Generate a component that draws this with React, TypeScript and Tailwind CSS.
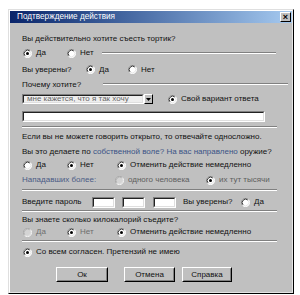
import React from 'react';

type RadioProps = { checked?: boolean; disabled?: boolean };

function Radio({ checked = false, disabled = false }: RadioProps) {
  // classic 3D sunken radio button
  return (
    <svg width="9" height="9" viewBox="0 0 12 12" className="shrink-0">
      <circle cx="6" cy="6" r="5.5" fill={disabled ? '#d4d4d4' : '#ffffff'} />
      <path d="M2.11 9.89 A5.5 5.5 0 0 1 9.89 2.11" fill="none" stroke={disabled ? '#a0a0a0' : '#808080'} strokeWidth="1" />
      <path d="M2.82 9.18 A4.5 4.5 0 0 1 9.18 2.82" fill="none" stroke={disabled ? '#b0b0b0' : '#000000'} strokeWidth="1" />
      <path d="M9.89 2.11 A5.5 5.5 0 0 1 2.11 9.89" fill="none" stroke="#ffffff" strokeWidth="1" />
      <path d="M9.18 2.82 A4.5 4.5 0 0 1 2.82 9.18" fill="none" stroke="#dfdfdf" strokeWidth="1" />
      {checked && <circle cx="6" cy="6" r="2" fill={disabled ? '#808080' : '#000000'} />}
    </svg>
  );
}

function Option({
  label,
  checked,
  disabled,
  className = '',
  textClass = 'text-[#111]',
}: {
  label: string;
  checked?: boolean;
  disabled?: boolean;
  className?: string;
  textClass?: string;
}) {
  return (
    <div className={`flex items-center gap-[4px] ${className}`}>
      <Radio checked={checked} disabled={disabled} />
      <span className={`whitespace-nowrap ${textClass}`}>{label}</span>
    </div>
  );
}

function Etched({ className = '' }: { className?: string }) {
  return <div className={`h-[2px] border-t border-t-[#808080] border-b border-b-white ${className}`} />;
}

function Sunken({ className = '', children }: { className?: string; children?: React.ReactNode }) {
  return (
    <div className={`border border-t-[#808080] border-l-[#808080] border-r-white border-b-white ${className}`}>
      <div className="h-full w-full border border-t-[#222] border-l-[#222] border-r-[#dfdfdf] border-b-[#dfdfdf]">
        {children}
      </div>
    </div>
  );
}

function Button({ label, className = '' }: { label: string; className?: string }) {
  return (
    <div className={`h-[15px] border border-t-white border-l-white border-r-black border-b-black ${className}`}>
      <div className="flex h-full w-full items-center justify-center border border-transparent border-r-[#808080] border-b-[#808080] text-[#111]">
        {label}
      </div>
    </div>
  );
}

export default function App() {
  return (
    <div
      className="h-[295px] w-[300px] overflow-hidden bg-white pl-[8px] pt-[9px] text-[8px] leading-none"
      style={{ fontFamily: '"Liberation Sans", Arial, sans-serif' }}
    >
      <div className="h-[285px] w-[286px] border border-t-[#dfdfdf] border-l-[#dfdfdf] border-r-black border-b-black bg-[#c0c0c0]">
        <div className="flex h-full flex-col border border-t-white border-l-white border-r-[#e4e4e4] border-b-[#e4e4e4]">
          {/* Title bar */}
          <div className="flex h-[12px] shrink-0 items-center justify-between bg-gradient-to-r from-[#0a246a] to-[#a6caf0] pl-[7px] pr-[1px]">
            <span className="text-[8.2px] text-white">Подтверждение действия</span>
            <div className="flex h-[10px] w-[11px] items-center justify-center border border-t-white border-l-white border-r-black border-b-black bg-[#c0c0c0] text-[9px] font-bold text-black">
              ×
            </div>
          </div>

          {/* Body */}
          <div className="flex flex-col pl-[12px] pt-[9px]">
            <div className="flex h-[14px] items-center text-[#111]">Вы действительно хотите съесть тортик?</div>

            <div className="flex h-[14px] items-center pl-[1px]">
              <Option label="Да" checked className="w-[44px]" />
              <Option label="Нет" className="w-[35px]" />
              <Etched className="w-[174px]" />
            </div>

            <div className="flex h-[19px] items-center">
              <span className="w-[64px] text-[#111]">Вы уверены?</span>
              <Option label="Да" checked className="w-[42px]" />
              <Option label="Нет" />
            </div>

            <div className="flex h-[12px] items-center">
              <span className="w-[81px] text-[#111]">Почему хотите?</span>
              <Etched className="mb-[3px] w-[185px]" />
            </div>

            <div className="mt-[2px] flex h-[12px] items-center">
              <div className="flex h-[10px] w-[131px]">
                <Sunken className="h-[10px] flex-1">
                  <div className="flex h-full items-center bg-[#eeeeee] pl-[3px] text-[#666]">мне кажется, что я так хочу</div>
                </Sunken>
                <div className="flex h-[10px] w-[9px] items-center justify-center border border-t-white border-l-white border-r-black border-b-black">
                  <svg width="5" height="3" viewBox="0 0 5 3">
                    <path d="M0 0 H5 L2.5 3 Z" fill="#000" />
                  </svg>
                </div>
              </div>
              <Option label="Свой вариант ответа" checked className="ml-[15px]" />
            </div>

            <Sunken className="mt-[6px] h-[11px] w-[243px]">
              <div className="h-full bg-white" />
            </Sunken>

            <div className="flex h-[9px] items-center">
              <Etched className="w-[255px]" />
            </div>

            <div className="flex h-[12px] items-center text-[#111]">
              Если вы не можете говорить открыто, то отвечайте односложно.
            </div>

            <div className="mt-[3px] flex h-[12px] items-center whitespace-nowrap text-[#111]">
              Вы это делаете по&nbsp;<span className="text-[#3a5386]">собственной воле? На вас направлено</span>&nbsp;оружие?
            </div>

            <div className="mt-[1px] flex h-[12px] items-center pl-[1px]">
              <Option label="Да" className="w-[44px]" />
              <Option label="Нет" checked className="w-[50px]" />
              <Option label="Отменить действие немедленно" checked />
            </div>

            <div className="mt-[3px] flex h-[12px] items-center">
              <span className="w-[93px] text-[#4a5b85]">Нападавших более:</span>
              <Option label="одного человека" disabled className="w-[91px]" textClass="text-[#5e5e5e]" />
              <Option label="их тут тысячи" checked textClass="text-[#5e5e5e]" />
            </div>

            <div className="flex h-[8px] items-center">
              <Etched className="w-[255px]" />
            </div>

            <div className="mt-[2px] flex h-[12px] items-center">
              <span className="w-[70px] text-[#111]">Введите пароль</span>
              <Sunken className="h-[11px] w-[23px]">
                <div className="h-full bg-white" />
              </Sunken>
              <Sunken className="ml-[7px] h-[11px] w-[23px]">
                <div className="h-full bg-white" />
              </Sunken>
              <Sunken className="ml-[8px] h-[11px] w-[23px]">
                <div className="h-full bg-white" />
              </Sunken>
              <span className="ml-[7px] w-[58px] text-[#111]">Вы уверены?</span>
              <Option label="Да" />
            </div>

            <div className="flex h-[6px] items-center">
              <Etched className="w-[255px]" />
            </div>

            <div className="flex h-[12px] items-center text-[#111]">Вы знаете сколько килокалорий съедите?</div>

            <div className="flex h-[12px] items-center pl-[1px]">
              <Option label="Да" disabled className="w-[44px]" textClass="text-[#6e6e6e]" />
              <Option label="Нет" checked className="w-[50px]" textClass="text-[#6e6e6e]" />
              <Option label="Отменить действие немедленно" checked />
            </div>

            <div className="flex h-[6px] items-center">
              <Etched className="w-[255px]" />
            </div>

            <div className="mt-[2px] flex h-[12px] items-center pl-[1px]">
              <Option label="Со всем согласен. Претензий не имею" checked />
            </div>

            <div className="mt-[9px] flex">
              <Button label="Ок" className="ml-[34px] w-[52px]" />
              <Button label="Отмена" className="ml-[16px] w-[51px]" />
              <Button label="Справка" className="ml-[7px] w-[50px]" />
            </div>
          </div>
        </div>
      </div>
    </div>
  );
}
